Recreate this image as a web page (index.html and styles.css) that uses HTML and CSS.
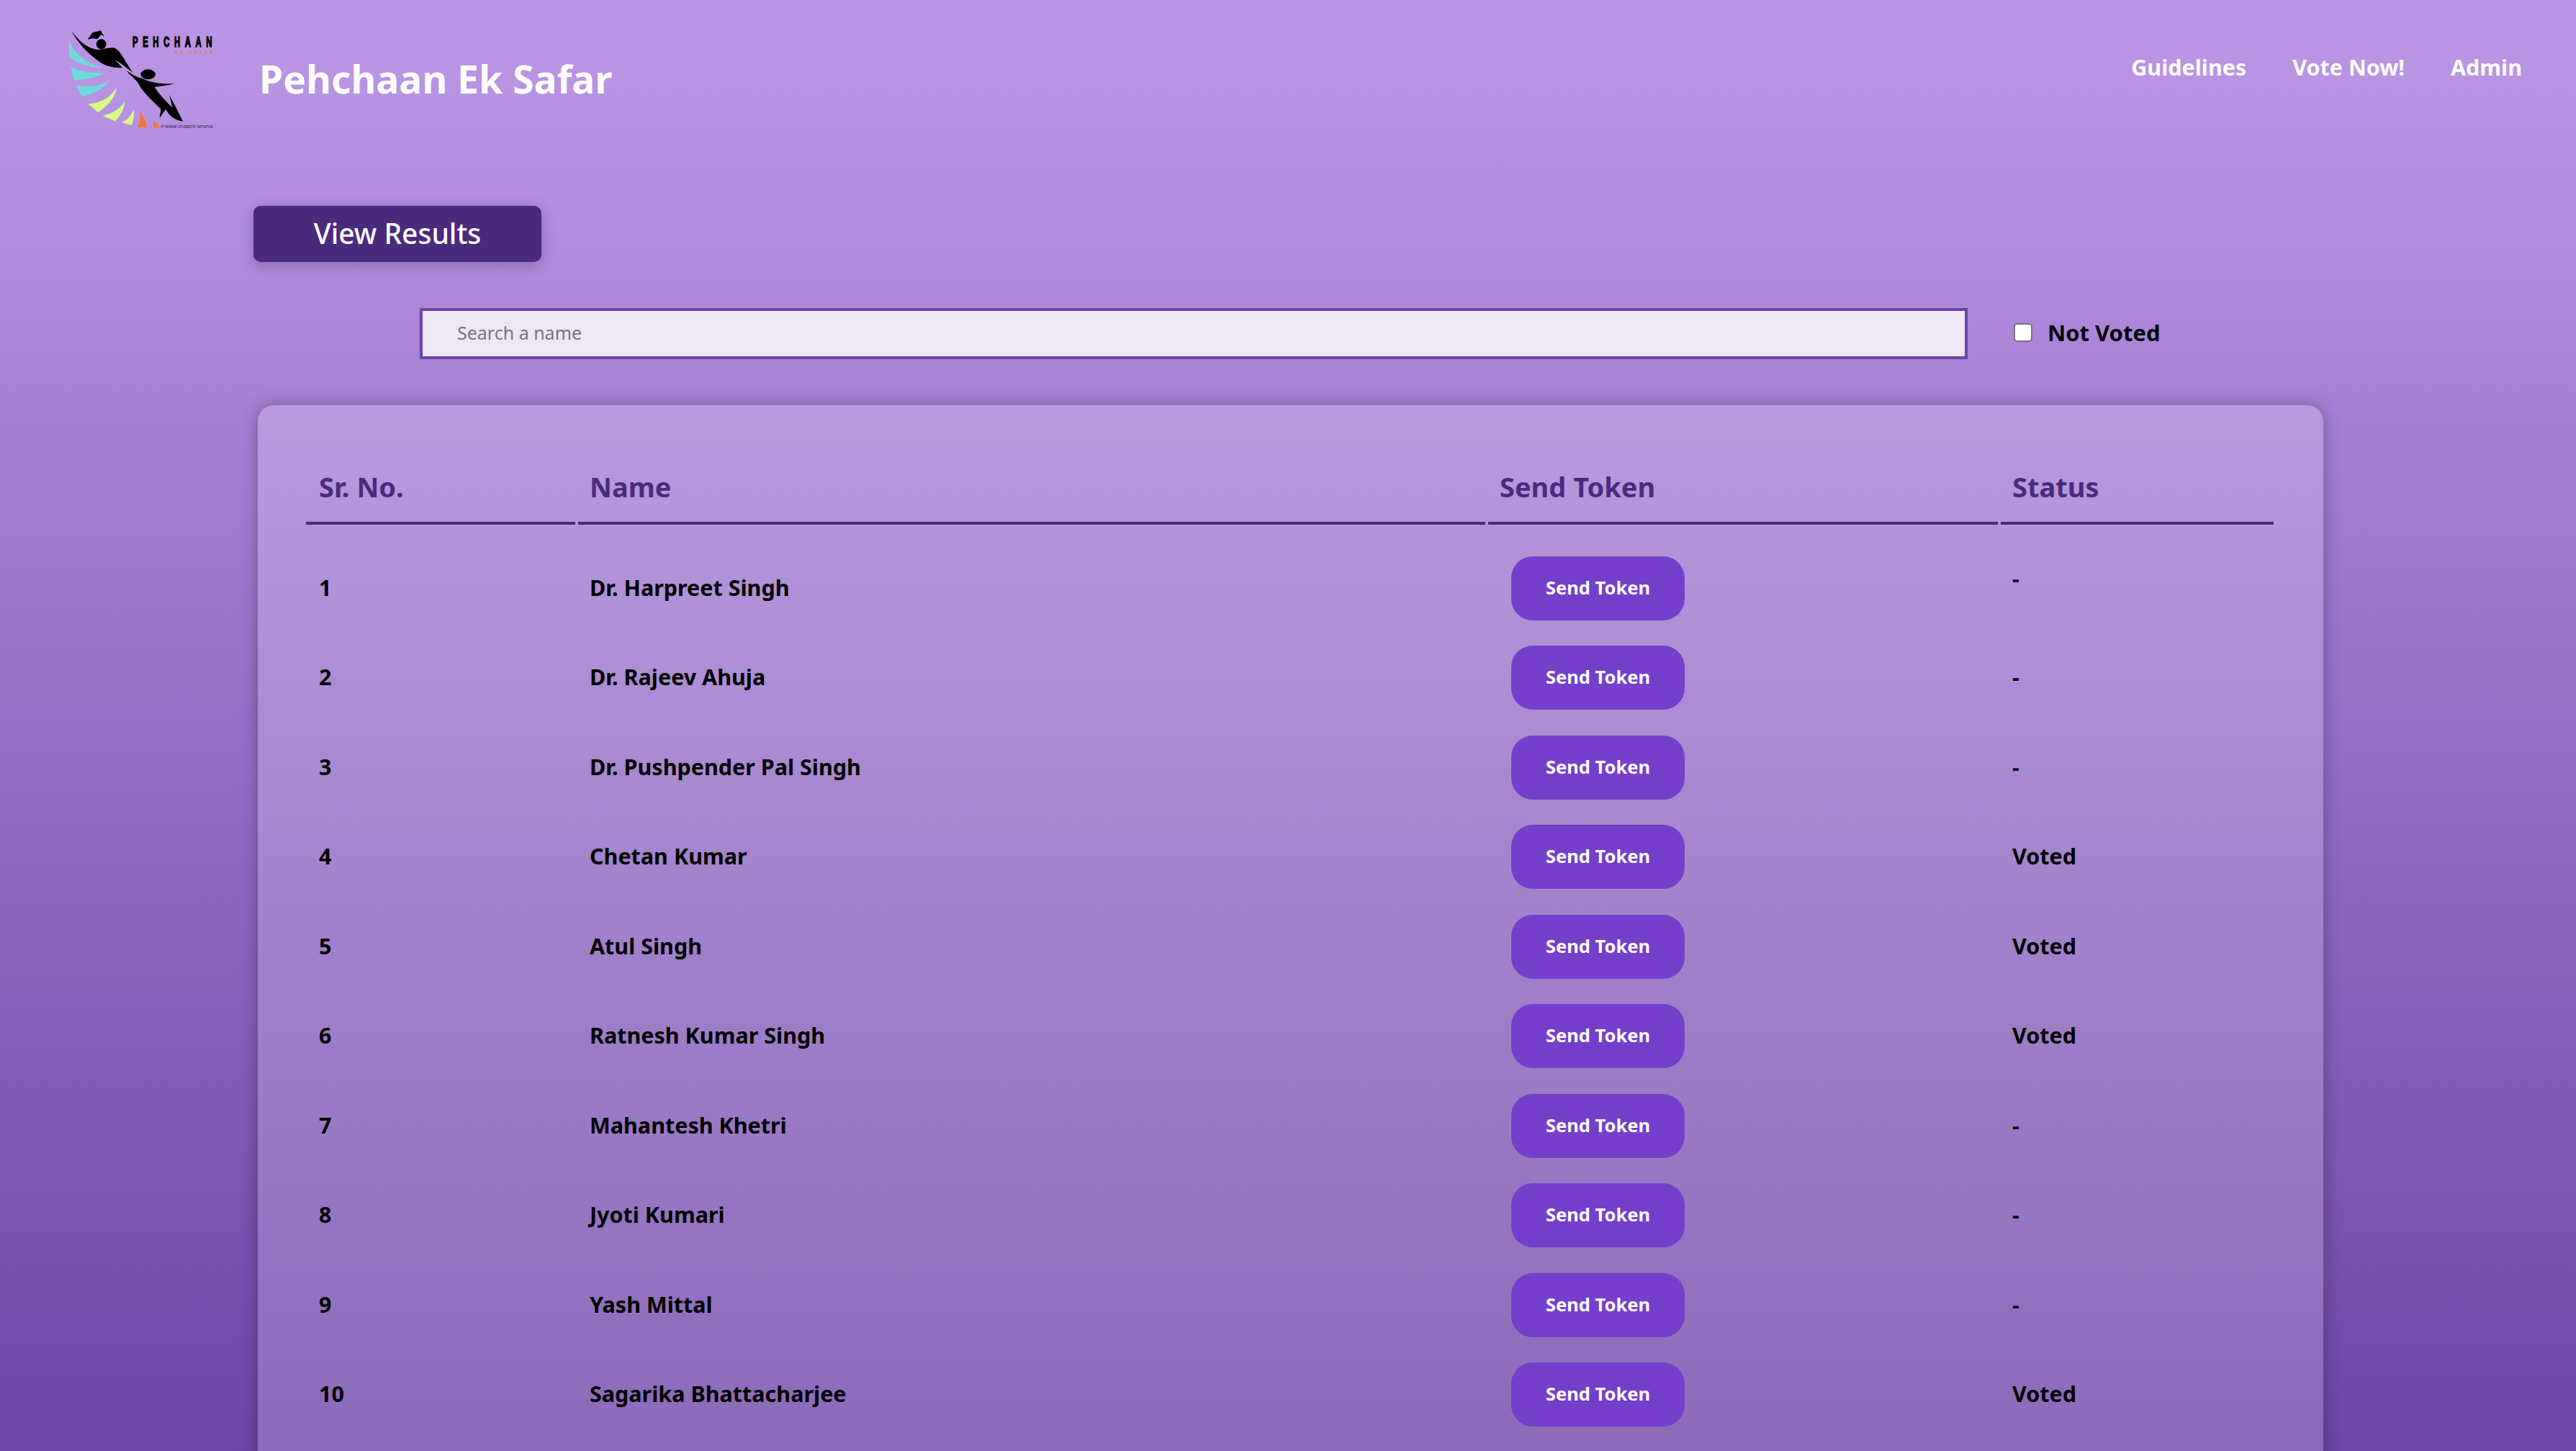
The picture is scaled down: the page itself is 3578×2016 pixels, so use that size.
FILE: index.html
```html
<!DOCTYPE html>
<html lang="en">
<head>
<meta charset="utf-8">
<title>Pehchaan Ek Safar</title>
<link rel="stylesheet" href="styles.css">
</head>
<body>
<header class="site-header">
  <svg class="logo" viewBox="0 0 900 540" aria-label="Pehchaan Ek Safar logo">
    <g class="logo-teal">
      <path d="M108,112 C130,165 180,205 248,222 C190,222 140,205 108,175 Z"/>
      <path d="M115,217 C150,240 205,248 257,242 C220,265 170,275 127,272 Z"/>
      <path d="M137,295 C180,305 235,300 276,277 C245,315 205,335 162,342 Z"/>
    </g>
    <g class="logo-lime">
      <path d="M186,372 C235,372 285,345 307,302 C300,350 265,385 228,408 Z"/>
      <path d="M247,422 C285,415 320,395 340,364 C338,400 318,425 300,445 Z"/>
      <path d="M326,450 C345,445 365,425 378,396 C380,420 375,445 368,462 Z"/>
    </g>
    <g class="logo-orange">
      <path d="M393,470 C405,455 405,430 402,406 C420,425 430,450 433,472 Z"/>
      <path d="M458,472 C462,465 458,450 455,443 C470,450 482,462 487,474 Z"/>
    </g>
    <g class="logo-black">
      <path d="M185,105 L205,76 L240,67 L255,95 L243,83 L225,103 L206,100 Z"/>
      <circle cx="242" cy="124" r="21"/>
      <path d="M118,70 C150,110 175,135 215,145 C240,152 270,135 298,140 C322,150 338,190 375,245 C345,220 325,205 300,190 L330,222 C300,225 270,218 245,205 C200,175 150,130 118,70 Z"/>
      <ellipse cx="437" cy="250" rx="31" ry="21"/>
      <path d="M347,235 C365,245 385,262 410,266 C450,285 500,292 550,288 C520,296 490,300 464,302 C480,330 510,360 538,388 L525,335 C545,370 565,410 582,446 C560,442 545,436 528,420 L510,396 L485,432 L490,395 C460,365 425,335 402,298 C392,275 365,258 347,235 Z"/>
    </g>
    <g transform="translate(372 136) scale(.55 1)">
      <text class="logo-title">PEHCHAAN</text>
    </g>
    <text class="logo-sub" x="550" y="165" textLength="158" lengthAdjust="spacing">EK SAFAR</text>
    <text class="logo-foot" x="490" y="473" textLength="218" lengthAdjust="spacingAndGlyphs">IIT ROPAR STUDENTS' INITIATIVE</text>
  </svg>
  <h1 class="site-title">Pehchaan Ek Safar</h1>
  <nav class="site-nav">
    <a href="#">Guidelines</a>
    <a href="#">Vote Now!</a>
    <a href="#">Admin</a>
  </nav>
</header>
<main class="content">
  <button class="results-btn" type="button">View Results</button>
  <div class="search-row">
    <input class="search-input" type="text" placeholder="Search a name">
    <label class="filter"><input class="filter-box" type="checkbox"><span>Not Voted</span></label>
  </div>
  <section class="card">
    <table class="voters">
      <colgroup>
        <col class="col-sr"><col class="col-name"><col class="col-send"><col class="col-status">
      </colgroup>
      <thead>
        <tr><th>Sr. No.</th><th>Name</th><th>Send Token</th><th>Status</th></tr>
      </thead>
      <tbody>
        <tr><td>1</td><td>Dr. Harpreet Singh</td><td class="token-cell"><button class="token-btn" type="button">Send Token</button></td><td>-</td></tr>
        <tr><td>2</td><td>Dr. Rajeev Ahuja</td><td class="token-cell"><button class="token-btn" type="button">Send Token</button></td><td>-</td></tr>
        <tr><td>3</td><td>Dr. Pushpender Pal Singh</td><td class="token-cell"><button class="token-btn" type="button">Send Token</button></td><td>-</td></tr>
        <tr><td>4</td><td>Chetan Kumar</td><td class="token-cell"><button class="token-btn" type="button">Send Token</button></td><td>Voted</td></tr>
        <tr><td>5</td><td>Atul Singh</td><td class="token-cell"><button class="token-btn" type="button">Send Token</button></td><td>Voted</td></tr>
        <tr><td>6</td><td>Ratnesh Kumar Singh</td><td class="token-cell"><button class="token-btn" type="button">Send Token</button></td><td>Voted</td></tr>
        <tr><td>7</td><td>Mahantesh Khetri</td><td class="token-cell"><button class="token-btn" type="button">Send Token</button></td><td>-</td></tr>
        <tr><td>8</td><td>Jyoti Kumari</td><td class="token-cell"><button class="token-btn" type="button">Send Token</button></td><td>-</td></tr>
        <tr><td>9</td><td>Yash Mittal</td><td class="token-cell"><button class="token-btn" type="button">Send Token</button></td><td>-</td></tr>
        <tr><td>10</td><td>Sagarika Bhattacharjee</td><td class="token-cell"><button class="token-btn" type="button">Send Token</button></td><td>Voted</td></tr>
      </tbody>
    </table>
  </section>
</main>
</body>
</html>
```
FILE: styles.css
```css
* { box-sizing: border-box; }
html, body { margin: 0; height: 100%; }
body {
  height: 2016px;
  overflow: hidden;
  font-family: "Noto Sans", "Open Sans", sans-serif;
  color: #000;
  background: linear-gradient(180deg, #ba94e3 0%, #ba94e3 5%, #6f45a8 100%);
}
.site-header {
  display: flex;
  align-items: center;
  height: 200px;
  padding: 20px 75px 0 60px;
}
.logo { width: 300px; height: 180px; flex: none; }
.logo-teal { fill: #6fdcdc; }
.logo-lime { fill: #d8fb84; }
.logo-orange { fill: #f07533; }
.logo-black { fill: #000; }
.logo-title {
  font: 700 62px "Liberation Sans", sans-serif;
  letter-spacing: 36px;
  fill: #000;
  stroke: #000;
  stroke-width: 4px;
}
.logo-sub { font: 700 18px "Liberation Sans", sans-serif; fill: #f07533; }
.logo-foot { font: 400 17px "Liberation Sans", sans-serif; fill: #1a1030; }
.site-title {
  margin: 0 0 2px 0;
  font-size: 53.5px;
  font-weight: 700;
  color: #fff;
}
.site-nav {
  display: flex;
  gap: 64px;
  margin-left: auto;
  align-self: flex-start;
  padding-top: 50px;
}
.site-nav a {
  font-size: 30.5px;
  line-height: 46px;
  font-weight: 700;
  color: #fff;
  text-decoration: none;
}
.content { padding: 86px 0 0 352px; }
.results-btn {
  display: block;
  width: 400px;
  height: 78px;
  padding: 0 0 3px;
  border: 0;
  border-radius: 10px;
  background: #4a2a7c;
  color: #fff;
  font: 500 39px "Noto Sans", sans-serif;
  box-shadow: 0 4px 20px rgba(0, 0, 0, .22);
}
.search-row {
  display: flex;
  align-items: center;
  margin: 64px 0 0 231px;
}
.search-input {
  width: 2150px;
  height: 71px;
  padding: 0 48px 3px;
  border: 4px solid #6a45a5;
  background: #efe6f7;
  font: 400 25px "Noto Sans", sans-serif;
  color: #333;
  outline: 0;
}
.search-input::placeholder { color: #757575; opacity: 1; }
.filter {
  display: flex;
  align-items: center;
  gap: 21px;
  margin: 0 0 3px 64px;
  font-size: 31px;
  font-weight: 700;
}
.filter-box {
  appearance: none;
  width: 26px;
  height: 26px;
  margin: 0;
  border: 2px solid #767676;
  border-radius: 5px;
  background: #fff;
}
.card {
  width: 2869px;
  min-height: 1600px;
  margin: 64px 0 0 6px;
  padding: 67px 63px;
  border-radius: 22px;
  background: rgba(255, 255, 255, .2);
  box-shadow: 0 0 24px rgba(0, 0, 0, .3);
}
.voters {
  width: 2741px;
  table-layout: fixed;
  border-collapse: separate;
  border-spacing: 4px 0;
}
.col-sr { width: 374px; }
.col-name { width: 1260px; }
.col-send { width: 708px; }
.col-status { width: 379px; }
.voters th {
  padding: 22px 16px 25px;
  border-bottom: 4px solid #4a2a7c;
  text-align: left;
  font-size: 38px;
  line-height: 48px;
  font-weight: 700;
  color: #4a2a7c;
}
.voters th:first-child, .voters td:first-child { padding-left: 18px; }
.voters td {
  padding: 16.25px 16px 19.25px;
  font-size: 30.5px;
  line-height: 40px;
  font-weight: 700;
  vertical-align: middle;
}
.voters td.token-cell { padding-top: 17.75px; padding-bottom: 17.75px; }
.voters tbody tr:first-child td:not(:last-child) { padding-top: 42.25px; }
.voters tbody tr:first-child td.token-cell { padding-top: 43.75px; }
.token-btn {
  display: block;
  width: 241px;
  height: 89px;
  margin-left: 16px;
  padding: 0 0 3px;
  border: 0;
  border-radius: 30px;
  background: #753fcb;
  color: #fff;
  font: 700 25.5px "Noto Sans", sans-serif;
}
```
